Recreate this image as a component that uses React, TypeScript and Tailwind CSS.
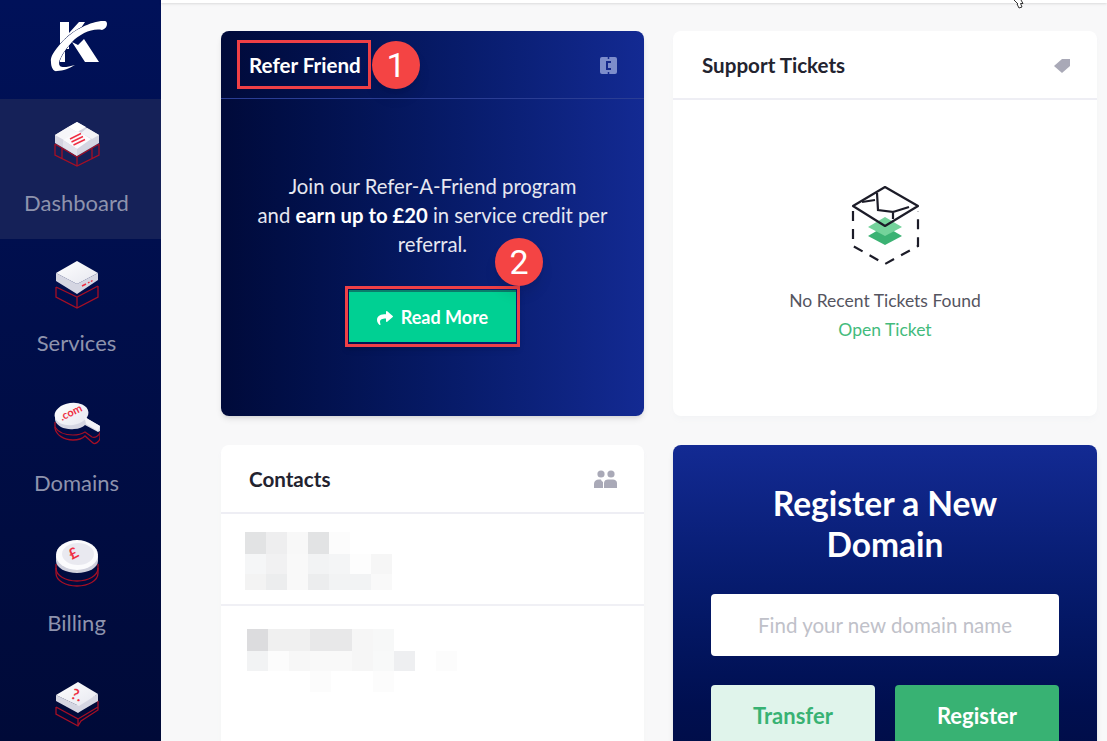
import React from "react";
import { FaShare } from "react-icons/fa";

const font = { fontFamily: '"Lato", "Open Sans", sans-serif' };
const R = "#a50f25";

function Grad() {
  return (
    <defs>
      <linearGradient id="w" x1="0" y1="0" x2="1" y2="1">
        <stop offset="0" stopColor="#ffffff" />
        <stop offset="1" stopColor="#e6e7ef" />
      </linearGradient>
    </defs>
  );
}

function DashIcon() {
  return (
    <svg width="46" height="48" viewBox="0 0 46 48">
      <path d="M1 24V35L23 46L45 35V24M1 24L8 28L23 37L38 28L45 24M23 37V46M8 28V39M38 28V39" fill="none" stroke={R} strokeWidth="1.3" />
      <path d="M1 15L23 2L45 15V23L23 36L1 23Z" fill="#d4d5e1" />
      <path d="M1 15L14 7L23 12L10 20Z" fill="#f6f6f9" />
      <path d="M14 7L23 2L32 7L23 12Z" fill="#ffffff" />
      <path d="M33 8L45 15L38 19L27 13Z" fill="#f2f2f6" />
      <path d="M9 20L24 11L37 19L23 29Z" fill="#fbfbfd" />
      <path d="M9 20V27L23 36V29Z" fill="#e3e4ec" />
      <path d="M16 19L27 13.5M17.5 22L29 16.5M19.5 25L31 19.5" stroke="#ef3044" strokeWidth="1.5" />
    </svg>
  );
}

function ServerIcon() {
  return (
    <svg width="46" height="50" viewBox="0 0 46 50">
      <Grad />
      <path d="M2 28V38L23 49L44 38V27M2 28L23 38L44 27M23 38V49" fill="none" stroke={R} strokeWidth="1.3" />
      <path d="M2 14V22L23 35L44 21V14L23 25Z" fill="#d5d6e2" />
      <path d="M23 2L44 14L23 25L2 14Z" fill="url(#w)" />
      <path d="M28 27L32 25M34 24L35.5 23M37 22.5L38.5 21.5" stroke="#ef3044" strokeWidth="1.5" />
    </svg>
  );
}

function DomainIcon() {
  return (
    <svg width="46" height="48" viewBox="0 0 46 48">
      <Grad />
      <path d="M1 22V28C2 35 10 40 19 40C25 40 29 38 31 36L39 43C41 45 46 41 46 38V32" fill="none" stroke={R} strokeWidth="1.3" />
      <path d="M1 27C4 32 11 35 19 35C24 35 28 34 31 32L38 37C41 38 44 36 46 33" fill="none" stroke={R} strokeWidth="1.2" />
      <path d="M1 15V20C3 27 12 30 20 29C25 29 29 27 31 25L44 32L46 31V26L34 19Z" fill="#d5d6e2" />
      <ellipse cx="17.5" cy="14" rx="17" ry="11" fill="url(#w)" transform="rotate(-8 17.5 14)" />
      <path d="M30 15L34 19L46 26L44 31L32 24Z" fill="#f3f3f7" />
      <text x="0" y="0" fontSize="11" fontWeight="700" fill="#ef3044" transform="translate(8 21) rotate(-26)" style={font}>.com</text>
    </svg>
  );
}

function BillIcon() {
  return (
    <svg width="46" height="48" viewBox="0 0 46 48">
      <path d="M2 24V33C2 41 12 46 23 46C34 46 44 41 44 33V24" fill="none" stroke={R} strokeWidth="1.3" />
      <path d="M2 28C2 36 12 41 23 41C34 41 44 36 44 28" fill="none" stroke={R} strokeWidth="1.3" />
      <path d="M2 16V21C2 28 12 33 23 33C34 33 44 28 44 21V16Z" fill="#d0d1dd" />
      <ellipse cx="23" cy="15" rx="21" ry="15" fill="#fbfbfd" />
      <ellipse cx="24" cy="14" rx="16" ry="11" fill="#e9e9f0" />
      <text x="0" y="0" fontSize="15" fontWeight="700" fill="#ef3044" transform="translate(18 20) rotate(-28)" style={font}>£</text>
    </svg>
  );
}

function HelpIcon() {
  return (
    <svg width="46" height="48" viewBox="0 0 46 48">
      <Grad />
      <path d="M2 27V34L24 46L27 41L44 30V21M2 27L24 39V46M24 39L44 27" fill="none" stroke={R} strokeWidth="1.3" />
      <path d="M2 15V21L24 33L27 31L44 21V14L23 25Z" fill="#d5d6e2" />
      <path d="M24 2L44 14L25 26L2 15Z" fill="url(#w)" />
      <text x="0" y="0" fontSize="15" fontWeight="700" fill="#ef3044" transform="translate(16 18) rotate(22)" style={font}>?.</text>
    </svg>
  );
}

function Logo() {
  return (
    <svg width="60" height="56" viewBox="0 0 60 56">
      <path d="M12 4H21V15L31 4H37L29 16L24 24L37 44H51L36 21L30 27L24 24L21 27V44H12Z" fill="#fff" />
      <path d="M17 44V31H21V44Z" fill="#001050" />
      <path
        d="M57 3C45 2 25 12 14 24C6 33 2 39 3 44C3 50 6 54 9 53C15 53 22 50 27 47C20 49 14 50 12 48C9 45 13 36 24 24C32 16 44 10 54 12C57 11 59 9 59 6C59 4 58 3 57 3Z"
        fill="#fff"
        stroke="#00104f"
        strokeWidth="1"
        paintOrder="stroke"
      />
    </svg>
  );
}

function NavItem({ icon, label, active }: { icon: React.ReactNode; label?: string; active?: boolean }) {
  return (
    <div className={`flex h-[140px] flex-col items-center pr-[8px] pt-[21px] ${active ? "bg-[#152158]" : ""}`}>
      <div className="flex h-[48px] items-center justify-center">{icon}</div>
      {label && <div className="mt-[21px] text-[22px] leading-[28px] text-[#8e93ad]">{label}</div>}
    </div>
  );
}

function CardHeader({ title, icon, dark, inset }: { title: string; icon: React.ReactNode; dark?: boolean; inset?: boolean }) {
  return (
    <div className={`flex items-center justify-between pr-[27px] pt-[1px] ${dark ? "h-[68px] border-b border-[#2a3d94]" : "h-[69px] border-b-2 border-[#eeeef4]"} ${inset ? "pl-[29px]" : "pl-[28px]"}`}>
      <span className={`text-[20.6px] font-bold ${dark ? "text-white" : "text-[#23232f]"}`}>{title}</span>
      {icon}
    </div>
  );
}

function Mosaic({ rows, cell }: { rows: string[][]; cell: number[] }) {
  return (
    <div className="flex flex-col">
      {rows.map((r, i) => (
        <div key={i} className="flex" style={{ height: cell[i] }}>
          {r.map((c, j) => (
            <div key={j} className="w-[21px]" style={{ backgroundColor: c }} />
          ))}
        </div>
      ))}
    </div>
  );
}

export default function App() {
  return (
    <div className="relative flex h-[741px] overflow-hidden bg-[#f8f8f9]" style={font}>
      <aside className="h-full w-[161px] shrink-0 bg-gradient-to-b from-[#001159] to-[#000a38]">
        <div className="flex h-[99px] items-start justify-center pr-[6px] pt-[18px]"><Logo /></div>
        <NavItem icon={<DashIcon />} label="Dashboard" active />
        <NavItem icon={<ServerIcon />} label="Services" />
        <NavItem icon={<DomainIcon />} label="Domains" />
        <NavItem icon={<BillIcon />} label="Billing" />
        <NavItem icon={<HelpIcon />} />
      </aside>

      <main className="min-w-0 flex-1">
        <div className="h-[3px] bg-white shadow-sm" />
        <div className="grid grid-cols-[423px_424px] gap-x-[29px] gap-y-[29px] pl-[60px] pt-[28px]">
          <section className="h-[385px] rounded-lg bg-gradient-to-r from-[#000a3a] to-[#132a93] shadow-md">
            <CardHeader
              dark
              title="Refer Friend"
              icon={
                <svg width="17" height="17" viewBox="0 0 17 17">
                  <rect width="17" height="17" rx="2" fill="#7d8dcb" />
                  <path d="M11 5H7V12H11" fill="none" stroke="#14288c" strokeWidth="2" />
                  <path d="M8.5 0V2M8.5 15V17" stroke="#14288c" strokeWidth="1.5" />
                </svg>
              }
            />
            <div className="flex flex-col items-center px-[20px] pt-[73px] text-center text-[20.3px] leading-[29px] text-[#e6e7f0]">
              <p>
                Join our Refer-A-Friend program
                <br />
                and <strong className="font-bold text-white">earn up to £20</strong> in service credit per
                <br />
                referral.
              </p>
              <div className="mt-[31px] flex h-[52px] w-[167px] items-center justify-center gap-[8px] border-t-2 border-[#0a7d6a] bg-[#00d093] pt-[1px] text-[18px] font-bold text-white">
                <FaShare className="h-[16px] w-[16px]" />
                Read More
              </div>
            </div>
          </section>

          <section className="h-[385px] rounded-lg bg-white shadow-md shadow-gray-100">
            <CardHeader
              inset
              title="Support Tickets"
              icon={
                <svg width="16" height="15" viewBox="0 0 16 15">
                  <path d="M0 8L8 1H16V8L8 15Z" fill="#a9a9b7" />
                </svg>
              }
            />
            <div className="flex flex-col items-center pt-[85px]">
              <svg width="70" height="80" viewBox="0 0 70 80" fill="none" stroke="#1c1c28" strokeWidth="2.2">
                <path d="M35 41L18 51L35 60L52 51Z" fill="#3bb273" stroke="none" />
                <path d="M35 32L18 42L35 51L52 42Z" fill="#74d39b" stroke="none" />
                <path d="M35 2L68 21L35 41L3 21Z" strokeLinejoin="round" />
                <path d="M12 17L25 15M27 8L28 25L43 27V34M43 27L59 22" />
                <path d="M3 26V61L35 79L68 61V26" strokeDasharray="10 8" />
              </svg>
              <div className="mt-[21px] text-[17.5px] leading-[29px] text-[#55555f]">No Recent Tickets Found</div>
              <div className="text-[17.5px] leading-[29px] text-[#43bb7c]">Open Ticket</div>
            </div>
          </section>

          <section className="h-[400px] rounded-lg bg-white shadow-md shadow-gray-100">
            <CardHeader
              title="Contacts"
              icon={
                <svg width="23" height="18" viewBox="0 0 23 18" fill="#a9a9b7">
                  <circle cx="7" cy="4" r="3.6" />
                  <circle cx="17" cy="4" r="3.6" />
                  <path d="M0 18V14C0 11 2 9.5 5 9.5H7C7.5 11 8 11 9 12V18Z" />
                  <path d="M10 18V13C10 10.5 12 9.5 14 9.5H19C21 9.5 23 11 23 13V18Z" />
                </svg>
              }
            />
            <div className="h-[92px] border-b-2 border-[#f0f0f5] pl-[24px] pt-[18px]">
              <Mosaic
                cell={[22, 20, 16]}
                rows={[
                  ["#e2e3e4", "#eeeeef", "#f8f8f8", "#e2e3e4", "#fcfcfc"],
                  ["#f5f6f7", "#f1f1f2", "#f9f9f9", "#f2f3f4", "#f4f5f6", "#fdfdfd", "#f6f6f6"],
                  ["#f3f3f3", "#ecedee", "#f9f9f9", "#ecedee", "#f2f3f4", "#f2f3f4", "#f9f9f9"],
                ]}
              />
            </div>
            <div className="pl-[26px] pt-[23px]">
              <Mosaic
                cell={[22, 20, 21]}
                rows={[
                  ["#dcdcde", "#f0f0f0", "#f0f0f0", "#e8e8e9", "#e8e8e9", "#f6f6f6", "#f7f8f8"],
                  ["#f2f3f4", "#fcfcfc", "#f7f7f7", "#f9f9f9", "#f9f9f9", "#f6f6f6", "#f8f9f9", "#eeeff1", "#ffffff", "#fcfcfc"],
                  ["#ffffff", "#ffffff", "#ffffff", "#fcfcfc", "#ffffff", "#ffffff", "#fcfcfc"],
                ]}
              />
            </div>
          </section>

          <section className="h-[400px] rounded-lg bg-gradient-to-b from-[#132a93] via-[#000f50] via-[65%] to-[#000a38] px-[38px] pt-[38px] shadow-md">
            <h2 className="text-center text-[33.5px] font-bold leading-[41px] text-white">
              Register a New
              <br />
              Domain
            </h2>
            <div className="mt-[29px] flex h-[62px] items-center justify-center rounded bg-white text-[20.5px] text-[#c0c1c9]">
              Find your new domain name
            </div>
            <div className="mt-[29px] grid grid-cols-2 gap-x-[20px]">
              <div className="flex h-[62px] items-center justify-center rounded bg-[#e0f4eb] pb-[2px] text-[22px] font-bold text-[#38b273]">Transfer</div>
              <div className="flex h-[62px] items-center justify-center rounded bg-[#38b273] pb-[2px] text-[22px] font-bold text-white">Register</div>
            </div>
          </section>
        </div>
      </main>

      {/* screenshot annotations */}
      <div className="absolute left-[237px] top-[40px] h-[49px] w-[134px] border-[3px] border-[#ef4046]" />
      <div className="absolute left-[372px] top-[41px] flex h-[48px] w-[48px] items-center justify-center rounded-full bg-[#f44444] text-[34px] text-white shadow-lg" style={{ fontFamily: "Roboto, sans-serif" }}>1</div>
      <div className="absolute left-[345px] top-[286px] h-[61px] w-[175px] border-[3px] border-[#ef4046] shadow-md" />
      <div className="absolute left-[495px] top-[238px] flex h-[48px] w-[48px] items-center justify-center rounded-full bg-[#f44444] text-[34px] text-white shadow-lg" style={{ fontFamily: "Roboto, sans-serif" }}>2</div>
      <svg className="absolute left-[1012px] top-0" width="16" height="9" viewBox="0 0 16 9">
        <path d="M2 0L6 4H5L7 8L10 7L8.5 3.5H11L9 0" fill="#fff" stroke="#333" strokeWidth="1" />
      </svg>
    </div>
  );
}
